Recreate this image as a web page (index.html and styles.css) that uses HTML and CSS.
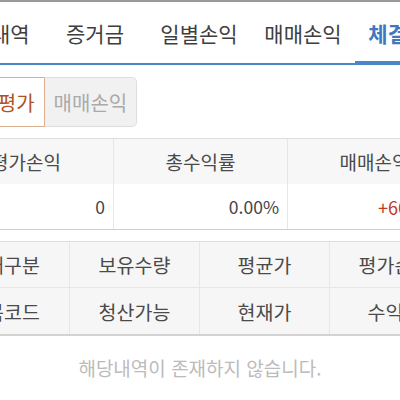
FILE: index.html
```html
<!DOCTYPE html>
<html lang="ko">
<head>
<meta charset="utf-8">
<link rel="stylesheet" href="styles.css">
</head>
<body>
<div class="screen">
  <nav class="tabs">
    <div class="tab">잔고내역</div>
    <div class="tab">증거금</div>
    <div class="tab">일별손익</div>
    <div class="tab">매매손익</div>
    <div class="tab active">체결내역</div>
  </nav>
  <div class="segment">
    <div class="seg on">잔고평가</div>
    <div class="seg off">매매손익</div>
  </div>
  <div class="summary">
    <div class="sh">평가손익</div>
    <div class="sh">총수익률</div>
    <div class="sh">매매손익</div>
    <div class="sd">0</div>
    <div class="sd">0.00%</div>
    <div class="sd up">+663,540</div>
  </div>
  <div class="grid">
    <div class="gh">거래구분</div>
    <div class="gh">보유수량</div>
    <div class="gh">평균가</div>
    <div class="gh">평가손익</div>
    <div class="gh r2">종목코드</div>
    <div class="gh r2">청산가능</div>
    <div class="gh r2">현재가</div>
    <div class="gh r2">수익률</div>
  </div>
  <p class="empty">해당내역이 존재하지 않습니다.</p>
</div>
</body>
</html>
```
FILE: styles.css
```css
html, body {
  margin: 0;
  padding: 0;
  background: #fff;
  overflow: hidden;
}
body {
  width: 400px;
  height: 400px;
  font-family: "Noto Sans CJK KR", "Noto Sans", sans-serif;
  color: #444;
}
.screen {
  width: 522px;
  margin-left: -61px;
  border-top: 2px solid #999;
}
.tabs {
  display: flex;
  border-bottom: 2px solid #4a86c8;
}
.tab {
  width: 104px;
  height: 61px;
  display: flex;
  align-items: center;
  justify-content: center;
  font-size: 21px;
  color: #3e3e3e;
}
.tab.active {
  color: #3d78c0;
  font-weight: 700;
  box-shadow: inset 0 -2px 0 #4a86c8;
}
.segment {
  display: flex;
  margin: 12px 0 0 12px;
  height: 50px;
}
.seg {
  display: flex;
  align-items: center;
  padding: 0 9px;
  font-size: 20px;
  box-sizing: border-box;
}
.seg.on {
  border: 1px solid #dcae90;
  color: #b0521d;
  background: #fff;
  border-radius: 5px 0 0 5px;
}
.seg.off {
  border: 1px solid #dedede;
  border-left: none;
  background: #f1f1f1;
  color: #aaa;
  border-radius: 0 5px 5px 0;
}
.summary {
  display: grid;
  grid-template-columns: repeat(3, 174px);
  margin-top: 11px;
  border-top: 1px solid #ddd;
  border-bottom: 1px solid #cfcfcf;
}
.sh, .sd {
  height: 45px;
  display: flex;
  align-items: center;
  box-sizing: border-box;
  border-left: 1px solid #e6e6e6;
}
.sh:nth-child(3n+1), .sd:nth-child(3n+1) {
  border-left: none;
}
.sh {
  background: #f7f7f7;
  justify-content: center;
  color: #4a4a4a;
  font-size: 19px;
}
.sd {
  justify-content: flex-end;
  padding-right: 8px;
  color: #444;
  font-size: 17.5px;
}
.sd.up {
  color: #c0392b;
  font-size: 18px;
}
.grid {
  display: grid;
  grid-template-columns: repeat(4, 130px);
  margin-top: 11px;
  border-top: 1px solid #ddd;
  border-bottom: 2px solid #d2d2d2;
  background: #f6f6f6;
}
.gh {
  height: 45px;
  display: flex;
  align-items: center;
  justify-content: center;
  font-size: 19.5px;
  color: #4a4a4a;
  border-left: 1px solid #e6e6e6;
  border-bottom: 1px solid #e6e6e6;
}
.gh:nth-child(4n+1) {
  border-left: none;
}
.gh.r2 {
  height: 46px;
  border-bottom: none;
}
.empty {
  margin: 20px 0 0;
  padding-left: 61px;
  width: 400px;
  text-align: center;
  font-size: 19px;
  line-height: 24px;
  color: #bbb;
}
```
